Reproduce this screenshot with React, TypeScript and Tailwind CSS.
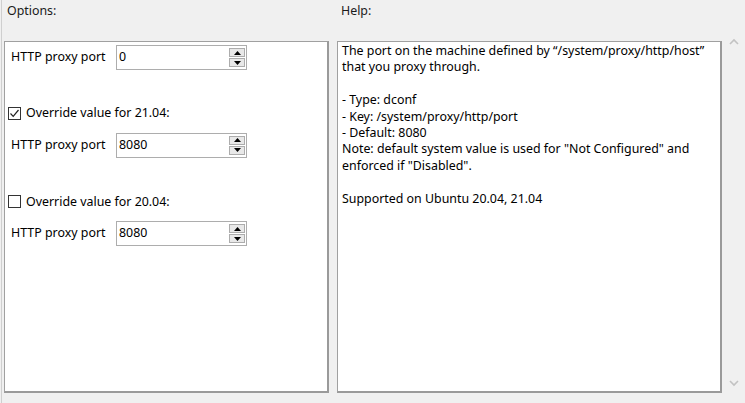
import React from "react";

const font = { fontFamily: '"Noto Sans", "Segoe UI", sans-serif' };

function Spin({ value }: { value: string }) {
  return (
    <div className="flex h-[25px] w-[131px] items-stretch border border-[#adadad] bg-white">
      <div className="flex-1 pl-[2px] pt-[2px] text-[12.4px] leading-[18px] text-black">{value}</div>
      <div className="mr-[1px] my-[2px] flex w-[16px] flex-col gap-[1px]">
        <div className="flex flex-1 items-center justify-center border border-[#acacac] bg-[#e8e8e8]">
          <svg width="7" height="4" viewBox="0 0 7 4"><path d="M0 4 L3.5 0 L7 4 Z" fill="#000" /></svg>
        </div>
        <div className="flex flex-1 items-center justify-center border border-[#acacac] bg-[#e8e8e8]">
          <svg width="7" height="4" viewBox="0 0 7 4"><path d="M0 0 L3.5 4 L7 0 Z" fill="#000" /></svg>
        </div>
      </div>
    </div>
  );
}

function PortRow({ value }: { value: string }) {
  return (
    <div className="flex items-center">
      <div className="w-[111px] pl-[6px] text-[12.4px] text-black">HTTP proxy port</div>
      <Spin value={value} />
    </div>
  );
}

function Check({ checked, label }: { checked: boolean; label: string }) {
  return (
    <div className="flex items-center gap-[5px] pl-[3px] text-[12.4px] text-black">
      <div className="flex h-[13px] w-[13px] items-center justify-center border border-[#333] bg-white">
        {checked && (
          <svg width="11" height="11" viewBox="0 0 11 11">
            <path d="M1.5 5.5 L4.2 8.3 L9.5 2" fill="none" stroke="#222" strokeWidth="1.2" />
          </svg>
        )}
      </div>
      <span>{label}</span>
    </div>
  );
}

export default function App() {
  return (
    <div className="h-[403px] w-[745px] overflow-hidden bg-[#f0f0f0]" style={font}>
      <div className="flex h-full border-l border-l-[#cfcfcf] ml-[1px]">
        <div className="flex w-[327px] flex-col pl-[2px]">
          <div className="h-[41px] pl-[3px] pt-[2px] text-[12.4px] text-[#1a1a1a]">Options:</div>
          <div className="h-[352px] border border-[#a0a0a0] border-b-2 border-r-2 border-b-[#9a9a9a] border-r-[#9a9a9a] bg-white">
            <div className="pt-[3px]">
              <PortRow value="0" />
            </div>
            <div className="mt-[34px]">
              <Check checked label="Override value for 21.04:" />
            </div>
            <div className="mt-[10px]">
              <PortRow value="8080" />
            </div>
            <div className="mt-[35px]">
              <Check checked={false} label="Override value for 20.04:" />
            </div>
            <div className="mt-[10px]">
              <PortRow value="8080" />
            </div>
          </div>
        </div>
        <div className="ml-[8px] flex w-[385px] flex-col">
          <div className="h-[41px] pl-[4px] pt-[2px] text-[12.4px] text-[#1a1a1a]">Help:</div>
          <div className="h-[352px] border border-[#a0a0a0] border-b-2 border-r-2 border-b-[#9a9a9a] border-r-[#9a9a9a] bg-white px-[4px] pt-[1px] text-[12.4px] leading-[16.4px] text-black">
            <div>The port on the machine defined by “/system/proxy/http/host”</div>
            <div>that you proxy through.</div>
            <div className="h-[16.4px]" />
            <div>- Type: dconf</div>
            <div>- Key: /system/proxy/http/port</div>
            <div>- Default: 8080</div>
            <div>Note: default system value is used for "Not Configured" and</div>
            <div>enforced if "Disabled".</div>
            <div className="h-[16.4px]" />
            <div>Supported on Ubuntu 20.04, 21.04</div>
          </div>
        </div>
        <div className="flex w-[23px] flex-col items-center justify-between pb-[16px] pt-[38px]">
          <svg width="10" height="8" viewBox="0 0 10 8"><path d="M1 6 L5 2 L9 6" fill="none" stroke="#c2c2c2" strokeWidth="1.6" /></svg>
          <svg width="10" height="8" viewBox="0 0 10 8"><path d="M1 2 L5 6 L9 2" fill="none" stroke="#c2c2c2" strokeWidth="1.6" /></svg>
        </div>
      </div>
    </div>
  );
}
